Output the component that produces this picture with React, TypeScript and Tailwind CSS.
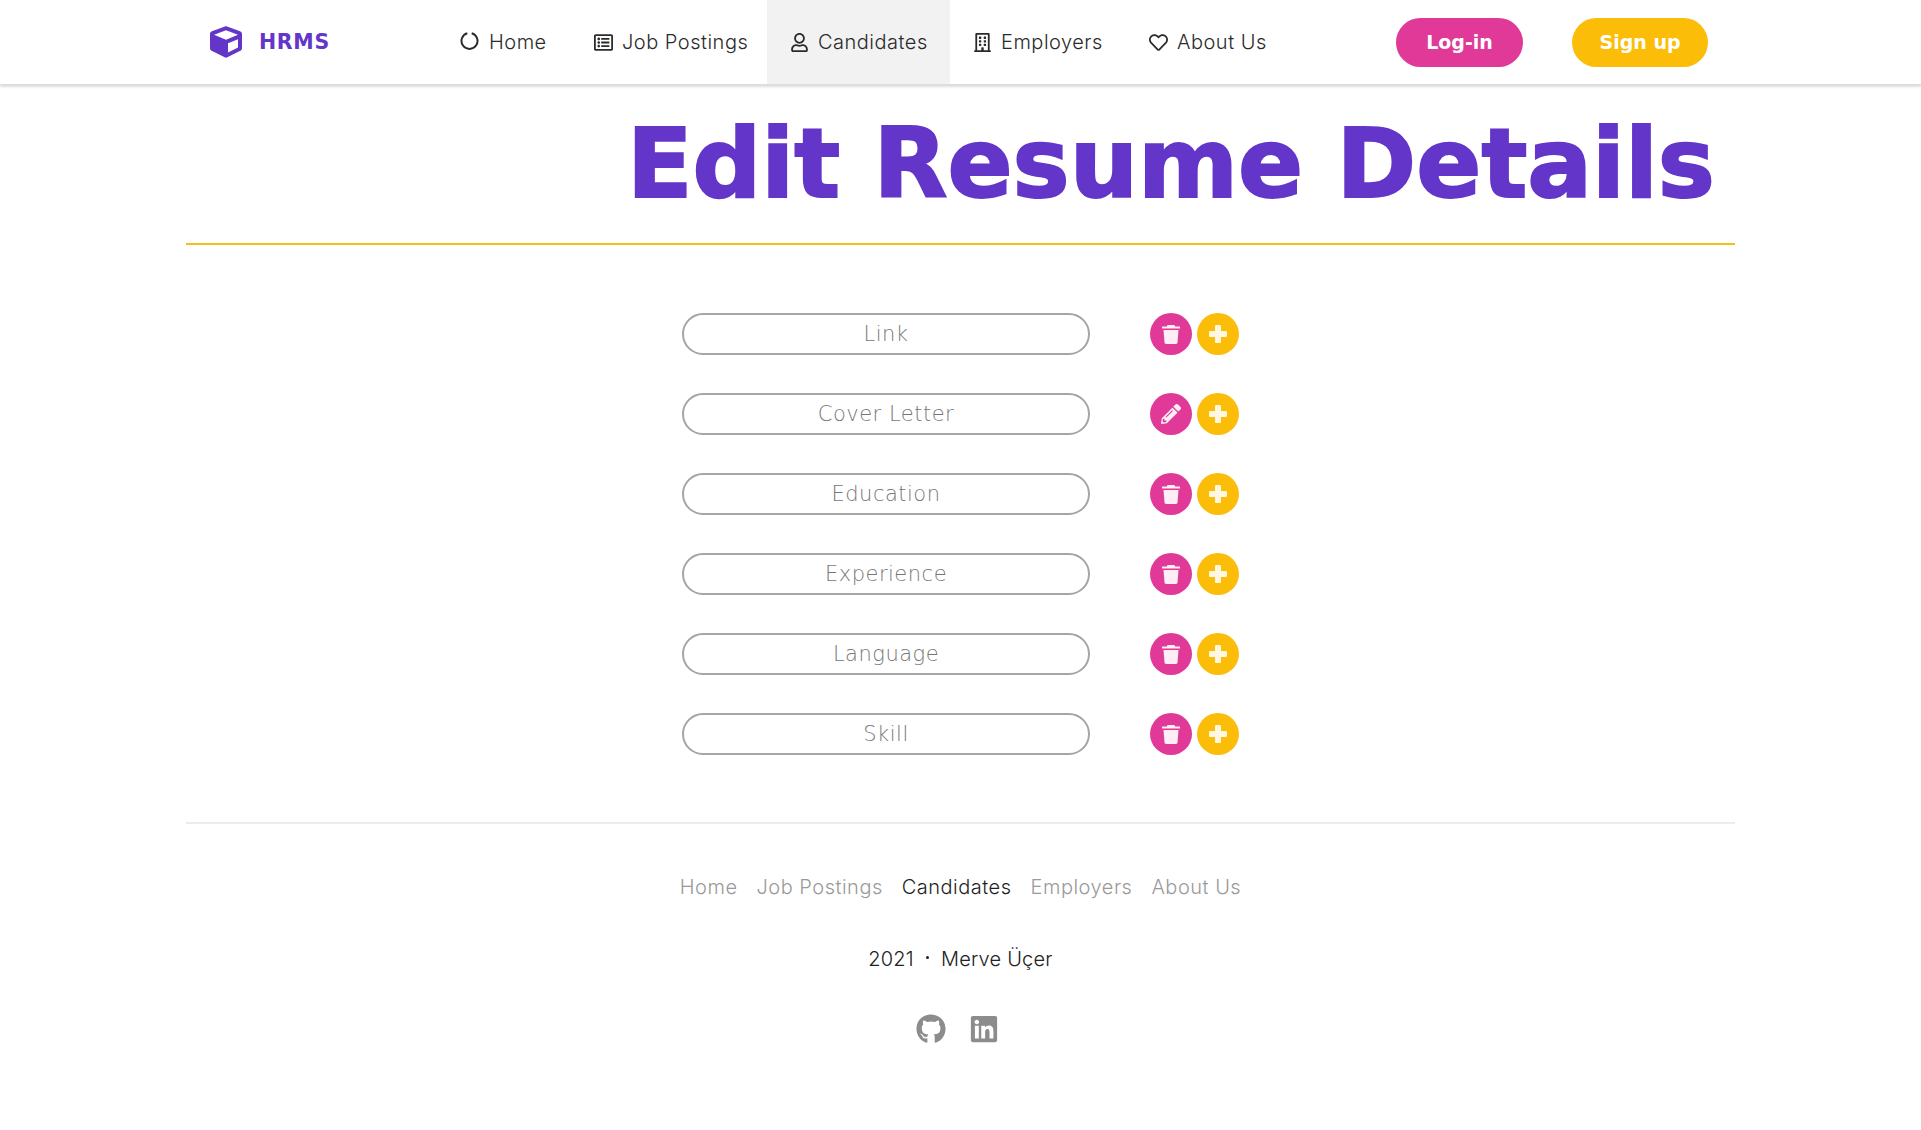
import React from 'react';
import { FaCube, FaRegListAlt, FaRegUser, FaRegBuilding, FaRegHeart, FaPencilAlt, FaGithub, FaLinkedin } from 'react-icons/fa';

const navItems = [
  { label: 'Job Postings', icon: <FaRegListAlt className="text-[19px]" />, width: 'w-[196px]' },
  { label: 'Candidates', icon: <FaRegUser className="text-[19px]" />, width: 'w-[183px]', active: true },
  { label: 'Employers', icon: <FaRegBuilding className="text-[19px]" />, width: 'w-[176px]' },
  { label: 'About Us', icon: <FaRegHeart className="text-[19px]" />, width: 'w-[164px]' },
];

const fields = [
  { label: 'Link' },
  { label: 'Cover Letter', edit: true },
  { label: 'Education' },
  { label: 'Experience' },
  { label: 'Language' },
  { label: 'Skill' },
];

const footerLinks = ['Home', 'Job Postings', 'Candidates', 'Employers', 'About Us'];

function HomeIcon() {
  return (
    <svg width="19" height="20" viewBox="0 0 19 20" fill="none" stroke="currentColor" strokeWidth="2" className="mb-[2px]">
      <path d="M7.3 2.2A8 8 0 1 0 11.7 2.2" />
    </svg>
  );
}

function TrashIcon() {
  return (
    <svg width="18" height="19" viewBox="0 0 18 19" fill="currentColor">
      <path d="M5.5 0h7l.6 1.4H18v2H0v-2h4.9z" />
      <path d="M1.5 5h15l-1 12.6A1.5 1.5 0 0 1 14 19H4a1.5 1.5 0 0 1-1.5-1.4z" />
    </svg>
  );
}

function PlusIcon() {
  return (
    <svg width="18" height="18" viewBox="0 0 18 18" fill="currentColor">
      <path d="M7 0h4a1 1 0 0 1 1 1v5h5a1 1 0 0 1 1 1v4a1 1 0 0 1-1 1h-5v5a1 1 0 0 1-1 1H7a1 1 0 0 1-1-1v-5H1a1 1 0 0 1-1-1V7a1 1 0 0 1 1-1h5V1a1 1 0 0 1 1-1z" />
    </svg>
  );
}

function ResumeRow({ label, edit }: { label: string; edit?: boolean }) {
  return (
    <div className="flex items-center h-[42px]">
      <div className="w-[408px] h-[42px] pt-[1px] rounded-full border-2 border-[#a5a5a5] flex items-center justify-center text-[#777777] text-[21px] tracking-[0.5px] font-extralight font-['DejaVu_Sans',sans-serif]">
        {label}
      </div>
      <button className="ml-[60px] w-[42px] h-[42px] rounded-full bg-[#e03997] text-[#fdeef6] flex items-center justify-center text-[20px]">
        {edit ? <FaPencilAlt /> : <TrashIcon />}
      </button>
      <button className="ml-[5px] w-[42px] h-[42px] rounded-full bg-[#fbbd08] text-[#fff8e1] flex items-center justify-center">
        <PlusIcon />
      </button>
    </div>
  );
}

export default function App() {
  return (
    <div className="min-h-[1130px] bg-white text-[#2b2b2b] font-['Inter',sans-serif]">
      <header className="h-[85px] bg-white shadow-[0_1px_3px_rgba(34,36,38,0.25)] border-b border-[#dedede]">
        <div className="mx-auto w-[1549px] h-full flex items-center text-[20px] font-light tracking-[0.5px]">
          <div className="w-[251px] pl-[24px] flex items-center gap-[17px] text-[#6435c9]">
            <FaCube className="text-[32px] shrink-0" />
            <span className="font-['DejaVu_Sans',sans-serif] text-[20.5px] font-bold tracking-[0.7px]">HRMS</span>
          </div>
          <a className="w-[134px] h-full pl-[23px] flex items-center gap-[10px]">
            <HomeIcon />
            Home
          </a>
          {navItems.map((item) => (
            <a key={item.label} className={`${item.width} h-full pl-[23px] flex items-center gap-[9px] ${item.active ? 'bg-[#f2f2f2]' : ''}`}>
              {item.icon}
              {item.label}
            </a>
          ))}
          <button className="ml-[106px] w-[127px] h-[49px] rounded-full bg-[#e03997] text-white text-[19px] tracking-normal font-bold font-['DejaVu_Sans',sans-serif]">
            Log-in
          </button>
          <button className="ml-[49px] w-[136px] h-[49px] rounded-full bg-[#fbbd08] text-white text-[19px] tracking-normal font-bold font-['DejaVu_Sans',sans-serif]">
            Sign up
          </button>
        </div>
      </header>

      <main className="mx-auto w-[1549px]">
        <div className="h-[160px] border-b-2 border-[#f2c012] flex items-center justify-end pr-[20px] pb-[1px]">
          <h1 className="text-[96px] leading-none font-bold text-[#6435c9] [-webkit-text-stroke:2px_#6435c9] font-['DejaVu_Sans',sans-serif] whitespace-nowrap">
            Edit Resume Details
          </h1>
        </div>

        <div className="pt-[68px] pl-[496px] flex flex-col gap-[38.1px]">
          {fields.map((f) => (
            <ResumeRow key={f.label} label={f.label} edit={f.edit} />
          ))}
        </div>

        <div className="mt-[67px] border-t-2 border-[#ececec]" />
      </main>

      <footer className="flex flex-col items-center">
        <div className="mt-[48px] flex gap-[19px] text-[20px] font-light tracking-[0.5px] text-[#9a9a9a]">
          {footerLinks.map((l) => (
            <a key={l} className={l === 'Candidates' ? 'text-[#1f1f1f]' : ''}>{l}</a>
          ))}
        </div>
        <div className="mt-[42px] flex items-center text-[20px] font-light tracking-[0.2px] text-[#222]">
          <span>2021</span>
          <span className="mx-[12px] w-[3px] h-[3px] rounded-full bg-[#222] mb-[3px]" />
          <span>Merve Üçer</span>
        </div>
        <div className="mt-[40px] pr-[7px] flex items-center gap-[23px] text-[#8c8c8c] text-[30px]">
          <FaGithub />
          <FaLinkedin />
        </div>
      </footer>
    </div>
  );
}
